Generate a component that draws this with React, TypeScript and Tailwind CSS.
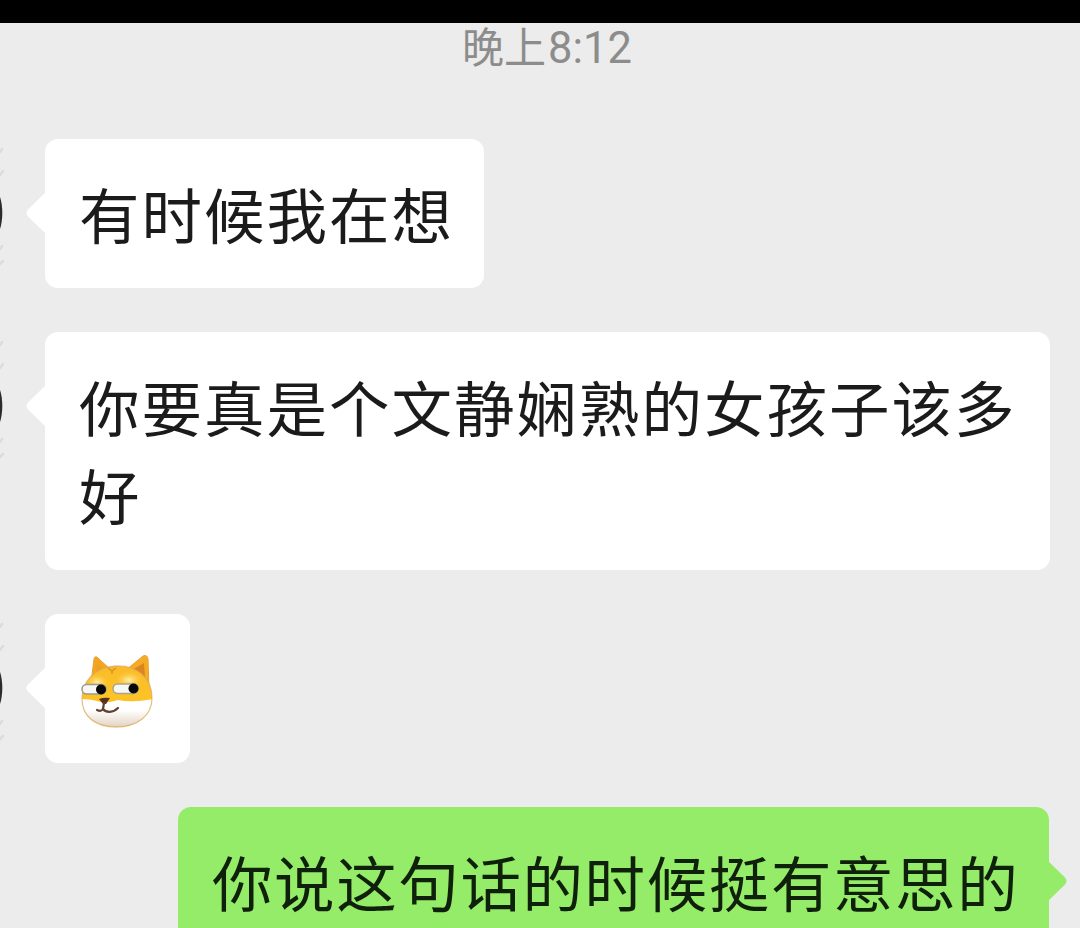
import type { ReactNode } from "react";

type BubbleProps = {
    children: ReactNode;
    className?: string;
};

const Avatar = () => {
    return (
        <svg className="absolute left-0 top-0 h-[149px] w-2" viewBox="0 0 8 149" fill="none">
            <ellipse cx="-6" cy="74" rx="8.3" ry="23" fill="#2b2b2b" />
            <g stroke="#dcdcdc" strokeWidth="2.5" strokeLinecap="round">
                <path d="M0 13l2-3M0 36l3-4M0 110l2-3M0 125l3-3" />
            </g>
        </svg>
    );
};

const LeftBubble = ({ children, className = "" }: BubbleProps) => {
    return (
        <div className="relative pl-[45px]">
            <Avatar />
            <svg className="absolute left-[26px] top-[53px] h-[42px] w-5" viewBox="0 0 20 42">
                <path d="M20 0L2 17.5Q-1 21 2 24.500L20 42Z" fill="#ffffff" />
            </svg>
            <div className={`rounded-[13px] bg-white pr-5 pl-[34px] ${className}`}>{children}</div>
        </div>
    );
};

const Shiba = () => {
    return (
        <svg className="h-[78px] w-[78px]" viewBox="0 0 78 78" fill="none">
            <defs>
                <linearGradient id="fur" x1="0" y1="0" x2="0" y2="1">
                    <stop offset="0" stopColor="#f9b72b" />
                    <stop offset="0.55" stopColor="#fdc326" />
                    <stop offset="1" stopColor="#f6ad17" />
                </linearGradient>
                <linearGradient id="muzzle" x1="0" y1="0" x2="0" y2="1">
                    <stop offset="0.35" stopColor="#ffffff" />
                    <stop offset="1" stopColor="#dcc9b3" />
                </linearGradient>
                <radialGradient id="brow">
                    <stop offset="0" stopColor="#fff0ae" />
                    <stop offset="1" stopColor="#fdc833" stopOpacity="0" />
                </radialGradient>
                <clipPath id="head">
                    <path d="M37 13C59 12 73 26 73 45C73 63 58 74 37 74C16 74 3 63 3 46C3 28 16 14 37 13Z" />
                </clipPath>
            </defs>
            <path d="M12 30L15 6Q16 2 19 5L32 17Z" fill="#f3a51e" stroke="#e8a238" />
            <path d="M17 21L18 11L25 17Z" fill="#eba021" />
            <path d="M47 17L64 3Q68 1 69 6L70 36Z" fill="#f5ac24" stroke="#e8a238" />
            <path d="M53 17L65 10L66 24Z" fill="#d98520" />
            <g clipPath="url(#head)">
                <rect width="78" height="78" fill="url(#fur)" />
                <path d="M2 46Q12 46 22 49Q30 50 39 47Q54 50 74 46V78H0Z" fill="url(#muzzle)" />
                <ellipse cx="18" cy="29" rx="12" ry="8" fill="url(#brow)" />
                <ellipse cx="50" cy="27" rx="14" ry="9" fill="url(#brow)" />
            </g>
            <path
                d="M37 13C59 12 73 26 73 45C73 63 58 74 37 74C16 74 3 63 3 46C3 28 16 14 37 13Z"
                stroke="#dba65c"
                strokeOpacity="0.65"
                strokeWidth="1.3"
            />
            <path d="M29 15l4 3l4-3M33 17v4" stroke="#d89022" strokeWidth="1.3" />
            <rect x="3" y="31.500" width="24" height="9.500" rx="4.700" fill="#f7f7f4" stroke="#999b91" strokeWidth="1.500" />
            <rect x="34" y="31" width="25" height="9.500" rx="4.700" fill="#f7f7f4" stroke="#aaa58b" strokeWidth="1.500" />
            <circle cx="22" cy="36.500" r="5" fill="#080808" />
            <circle cx="54.500" cy="35.500" r="5" fill="#080808" />
            <path d="M20 46Q25 44 31 45L27 51H24Z" fill="#58301b" />
            <path
                d="M25 50L24 56Q22 59 18 57M24 56C27 60 34 60 39 55"
                stroke="#62402d"
                strokeWidth="2.200"
                strokeLinecap="round"
            />
        </svg>
    );
};

const App = () => {
    return (
        <div className="h-[928px] w-[1080px] overflow-hidden bg-[#ececec] font-['Noto_Sans_CJK_SC',sans-serif] text-[60.5px] leading-[88px] tracking-[2px] text-[#1b1b1b]">
            <div className="h-[23px] bg-black" />
            <p className="h-[116px] pl-[462px] text-[42px] leading-[44px] tracking-normal text-[#8c8c8c]">
                晚上<span className="ml-0.5 font-[Roboto,sans-serif] text-[43.5px]">8:12</span>
            </p>

            <div className="flex flex-col items-start gap-11">
                <LeftBubble className="h-[149px] w-[439px] pt-[30px]">有时候我在想</LeftBubble>
                <LeftBubble className="h-[238px] w-[1005px] pt-[30px]">
                    你要真是个文静娴熟的女孩子该多好
                </LeftBubble>
                <LeftBubble className="h-[149px] w-[145px] pt-[39px]">
                    <Shiba />
                </LeftBubble>
            </div>

            <div className="relative mt-11 ml-[178px] h-[149px] w-[871px] rounded-[13px] bg-[#95ec69] pt-[30px] pl-[34px] text-[#10210b]">
                <p className="tracking-[1.6px] whitespace-nowrap">你说这句话的时候挺有意思的</p>
                <svg className="absolute top-[53px] -right-[18px] h-[42px] w-5" viewBox="0 0 20 42">
                    <path d="M0 0L18 17.500Q21 21 18 24.500L0 42Z" fill="#95ec69" />
                </svg>
            </div>
        </div>
    );
};

export default App;
